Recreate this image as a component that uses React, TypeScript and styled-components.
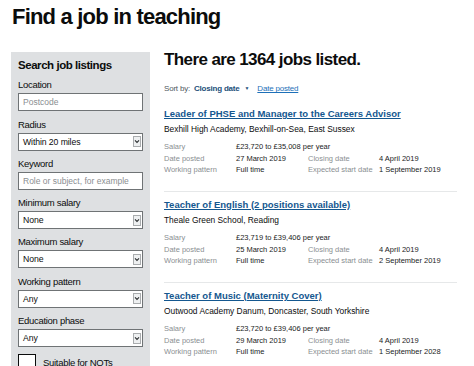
import React from 'react';
import styled, { createGlobalStyle } from 'styled-components';

const GlobalStyle = createGlobalStyle`
  html, body {
    margin: 0;
    padding: 0;
    background: #fff;
    color: #0b0c0c;
    font-family: "Liberation Sans", Arial, sans-serif;
  }
  body {
    overflow: hidden;
  }
`;

const SPage = styled.div`
  width: 474px;
  height: 366px;
  overflow: hidden;
`;

const STitle = styled.h1`
  margin: 3.5px 0 0 12px;
  font-size: 22px;
  line-height: 26px;
  font-weight: 700;
  letter-spacing: -0.8px;
`;

const SLayout = styled.div`
  display: flex;
  align-items: flex-start;
  margin-top: 22.5px;
  padding-left: 11px;
`;

const SSidebar = styled.aside`
  width: 139px;
  height: 330px;
  box-sizing: border-box;
  flex-shrink: 0;
  background: #dee0e2;
  padding: 6.4px 7px 0 7px;
`;

const SSidebarHeading = styled.h2`
  margin: 0 0 6.85px;
  font-size: 11.5px;
  line-height: 14px;
  font-weight: 700;
  letter-spacing: -0.45px;
`;

const SField = styled.div`
  margin-bottom: 7.3px;
`;

const SLabel = styled.label`
  display: block;
  margin-bottom: 2px;
  font-size: 9.5px;
  line-height: 12px;
  letter-spacing: -0.3px;
`;

const SInput = styled.input`
  display: block;
  width: 125px;
  height: 18px;
  box-sizing: border-box;
  margin: 0;
  padding: 0 4px;
  border: 1.5px solid #6f7375;
  border-radius: 0;
  background: #fff;
  font-family: "Liberation Sans", Arial, sans-serif;
  font-size: 8.5px;
  color: #0b0c0c;
  outline: none;

  &::placeholder {
    color: #8a8e91;
  }
`;

const SSelect = styled.div`
  display: flex;
  align-items: center;
  justify-content: space-between;
  width: 125px;
  height: 18px;
  box-sizing: border-box;
  padding: 0 1.5px 0 4px;
  border: 1.5px solid #6f7375;
  background: #fff;
  font-size: 8.7px;
  letter-spacing: -0.1px;
`;

const SSelectArrow = styled.span`
  display: flex;
  align-items: center;
  justify-content: center;
  width: 8px;
  height: 11px;
  box-sizing: border-box;
  border: 1px solid #a9acae;
  background: #eef0f1;
`;

const SCheckRow = styled.div`
  display: flex;
  align-items: flex-start;
  gap: 7px;
  margin-top: 0.7px;
`;

const SCheckbox = styled.span`
  display: block;
  width: 18px;
  height: 18px;
  box-sizing: border-box;
  border: 1.5px solid #0b0c0c;
  background: #fff;
`;

const SCheckLabel = styled.span`
  padding-top: 3px;
  font-size: 9.5px;
  line-height: 12px;
  letter-spacing: -0.3px;
`;

const SMain = styled.main`
  width: 293px;
  margin-left: 14px;
  margin-top: -2.1px;
`;

const SResultsHeading = styled.h2`
  margin: 0;
  font-size: 17px;
  line-height: 20px;
  font-weight: 700;
  letter-spacing: -0.6px;
`;

const SSortBar = styled.div`
  display: flex;
  align-items: center;
  margin-top: 13.3px;
  font-size: 8px;
  line-height: 11px;
  letter-spacing: -0.2px;
`;

const SSortLabel = styled.span`
  color: #505a5f;
  margin-right: 4px;
`;

const SSortCurrent = styled.span`
  color: #1d4f7a;
  font-weight: 700;
`;

const SSortMarker = styled.span`
  color: #1d4f7a;
  font-size: 5px;
  margin: 0 8px 0 5px;
`;

const SSortLink = styled.a`
  color: #1d70b8;
  text-decoration: underline;
`;

const SJob = styled.article<{ $first?: boolean }>`
  padding: ${(p) => (p.$first ? '12.5px' : '6px')} 0 14.75px;
  border-bottom: 1px solid #e6e8e9;
`;

const SJobTitle = styled.a`
  display: block;
  color: #14578f;
  font-size: 9.5px;
  line-height: 14px;
  font-weight: 700;
  text-decoration: underline;
  text-underline-offset: 1px;
`;

const SAddress = styled.p`
  margin: 2px 0 6.15px;
  font-size: 8.4px;
  line-height: 12px;
`;

const SMeta = styled.dl`
  display: grid;
  grid-template-columns: 72px 72px 71px 1fr;
  margin: 0;
  font-size: 7.5px;
  line-height: 11.7px;
`;

const SMetaTerm = styled.dt`
  color: #8a8f92;
`;

const SMetaValue = styled.dd<{ $wide?: boolean }>`
  margin: 0;
  color: #1a1c1d;
  grid-column: ${(p) => (p.$wide ? 'span 3' : 'auto')};
`;

const Chevron = () => (
  <svg width="6" height="5" viewBox="0 0 6 5">
    <path d="M1 1.3 L3 3.4 L5 1.3" fill="none" stroke="#2a2d2f" strokeWidth="1.1" />
  </svg>
);

const SelectField = ({ label, value }: { label: string; value: string }) => (
  <SField>
    <SLabel>{label}</SLabel>
    <SSelect>
      <span>{value}</span>
      <SSelectArrow>
        <Chevron />
      </SSelectArrow>
    </SSelect>
  </SField>
);

const InputField = ({ label, placeholder }: { label: string; placeholder: string }) => (
  <SField>
    <SLabel>{label}</SLabel>
    <SInput placeholder={placeholder} readOnly />
  </SField>
);

interface Job {
  title: string;
  address: string;
  salary: string;
  posted: string;
  closing: string;
  pattern: string;
  start: string;
}

const JOBS: Job[] = [
  {
    title: 'Leader of PHSE and Manager to the Careers Advisor',
    address: 'Bexhill High Academy, Bexhill-on-Sea, East Sussex',
    salary: '£23,720 to £35,008 per year',
    posted: '27 March 2019',
    closing: '4 April 2019',
    pattern: 'Full time',
    start: '1 September 2019',
  },
  {
    title: 'Teacher of English (2 positions available)',
    address: 'Theale Green School, Reading',
    salary: '£23,719 to £39,406 per year',
    posted: '25 March 2019',
    closing: '4 April 2019',
    pattern: 'Full time',
    start: '2 September 2019',
  },
  {
    title: 'Teacher of Music (Maternity Cover)',
    address: 'Outwood Academy Danum, Doncaster, South Yorkshire',
    salary: '£23,720 to £39,406 per year',
    posted: '29 March 2019',
    closing: '4 April 2019',
    pattern: 'Full time',
    start: '1 September 2028',
  },
];

const JobItem = ({ job, first }: { job: Job; first: boolean }) => (
  <SJob $first={first}>
    <SJobTitle href="#">{job.title}</SJobTitle>
    <SAddress>{job.address}</SAddress>
    <SMeta>
      <SMetaTerm>Salary</SMetaTerm>
      <SMetaValue $wide>{job.salary}</SMetaValue>
      <SMetaTerm>Date posted</SMetaTerm>
      <SMetaValue>{job.posted}</SMetaValue>
      <SMetaTerm>Closing date</SMetaTerm>
      <SMetaValue>{job.closing}</SMetaValue>
      <SMetaTerm>Working pattern</SMetaTerm>
      <SMetaValue>{job.pattern}</SMetaValue>
      <SMetaTerm>Expected start date</SMetaTerm>
      <SMetaValue>{job.start}</SMetaValue>
    </SMeta>
  </SJob>
);

const App = () => (
  <SPage>
    <GlobalStyle />
    <STitle>Find a job in teaching</STitle>
    <SLayout>
      <SSidebar>
        <SSidebarHeading>Search job listings</SSidebarHeading>
        <InputField label="Location" placeholder="Postcode" />
        <SelectField label="Radius" value="Within 20 miles" />
        <InputField label="Keyword" placeholder="Role or subject, for example" />
        <SelectField label="Minimum salary" value="None" />
        <SelectField label="Maximum salary" value="None" />
        <SelectField label="Working pattern" value="Any" />
        <SelectField label="Education phase" value="Any" />
        <SCheckRow>
          <SCheckbox />
          <SCheckLabel>Suitable for NQTs</SCheckLabel>
        </SCheckRow>
      </SSidebar>
      <SMain>
        <SResultsHeading>There are 1364 jobs listed.</SResultsHeading>
        <SSortBar>
          <SSortLabel>Sort by:</SSortLabel>
          <SSortCurrent>Closing date</SSortCurrent>
          <SSortMarker>▼</SSortMarker>
          <SSortLink href="#">Date posted</SSortLink>
        </SSortBar>
        {JOBS.map((job, i) => (
          <JobItem key={job.title} job={job} first={i === 0} />
        ))}
      </SMain>
    </SLayout>
  </SPage>
);

export default App;
